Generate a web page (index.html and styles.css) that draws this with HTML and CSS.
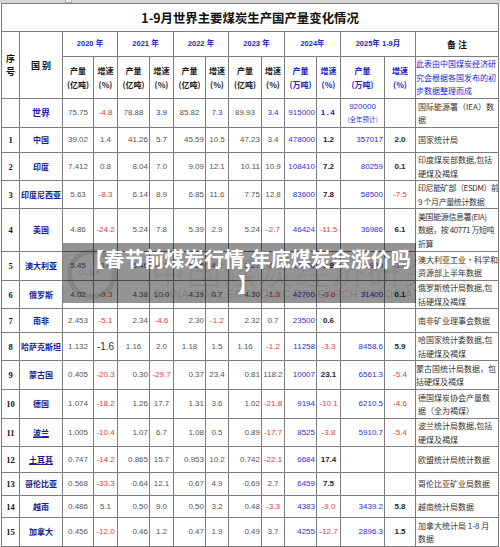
FILE: index.html
```html
<!DOCTYPE html>
<html lang="zh-CN">
<head>
<meta charset="utf-8">
<title>1-9月世界主要煤炭生产国产量变化情况</title>
<link rel="stylesheet" href="styles.css">
</head>
<body>
<div class="topbar"><span class="handle"></span></div>
<div class="sheet">
  <table class="coal">
    <colgroup>
      <col class="w18"><col class="w43">
      <col class="w31"><col class="w24">
      <col class="w32"><col class="w24">
      <col class="w32"><col class="w23">
      <col class="w33"><col class="w23">
      <col class="w32"><col class="w24">
      <col class="w44"><col class="w31">
      <col class="w83">
    </colgroup>
    <thead>
      <tr class="h28"><th colspan="15" class="title">1-9月世界主要煤炭生产国产量变化情况</th></tr>
      <tr class="h25">
        <th rowspan="2" class="hd">序<br>号</th>
        <th rowspan="2" class="hd">国 别</th>
        <th colspan="2" class="yr">2020 年</th>
        <th colspan="2" class="yr">2021 年</th>
        <th colspan="2" class="yr">2022 年</th>
        <th colspan="2" class="yr">2023 年</th>
        <th colspan="2" class="yr">2024年</th>
        <th colspan="2" class="yr">2025年 1-9月</th>
        <th class="hd">备 注</th>
      </tr>
      <tr class="h42">
        <th class="sub">产量<br>(亿吨)</th><th class="sub">增速<br>(%)</th>
        <th class="sub">产量<br>(亿吨)</th><th class="sub">增速<br>(%)</th>
        <th class="sub">产量<br>(亿吨)</th><th class="sub">增速<br>(%)</th>
        <th class="sub">产量<br>(亿吨)</th><th class="sub">增速<br>(%)</th>
        <th class="sub blue">产量<br>(万吨)</th><th class="sub blue">增速<br>(%)</th>
        <th class="sub blue">产量<br>(万吨)</th><th class="sub blue">增速<br>(%)</th>
        <th class="note notehead">此表由中国煤炭经济研<br>究会根据各国发布的初<br>步数据整理而成</th>
      </tr>
    </thead>
    <tbody class="data">
      <tr class="h29 world">
        <td></td><td class="name big">世界</td>
        <td>75.75</td><td class="r">-4.8</td>
        <td>78.88</td><td class="b">3.9</td>
        <td>85.82</td><td class="b">7.3</td>
        <td>89.93</td><td class="b">3.4</td>
        <td class="b">915000</td><td class="b wide">1.4</td>
        <td class="b">920000<br><span class="est">(全年预计)</span></td><td></td>
        <td class="note">国际能源署（IEA）数<br>据</td>
      </tr>
      <tr class="h25">
        <td class="no">1</td><td class="name">中国</td>
        <td>39.02</td><td>1.4</td><td>41.26</td><td>5.7</td><td>45.59</td><td>10.5</td><td>47.23</td><td>3.4</td>
        <td class="b">478000</td><td class="k">1.2</td><td class="b">357017</td><td class="k">2.0</td>
        <td class="note">国家统计局</td>
      </tr>
      <tr class="h27">
        <td class="no">2</td><td class="name">印度</td>
        <td>7.412</td><td>0.8</td><td>8.04</td><td>7.0</td><td>9.09</td><td>12.1</td><td>10.11</td><td>10.9</td>
        <td class="b">108410</td><td class="k">7.2</td><td class="b">80259</td><td class="k">0.1</td>
        <td class="note">印度煤炭部数据,包括<br>硬煤及褐煤</td>
      </tr>
      <tr class="h28">
        <td class="no">3</td><td class="name">印度尼西亚</td>
        <td>5.63</td><td class="r">-8.3</td><td>6.14</td><td>8.9</td><td>6.85</td><td>11.6</td><td>7.75</td><td>12.8</td>
        <td class="b">83600</td><td class="k">7.8</td><td class="b">58500</td><td class="r">-7.5</td>
        <td class="note tight">印尼能矿部（ESDM）前<br>9 个月产量统计数据</td>
      </tr>
      <tr class="h43">
        <td class="no">4</td><td class="name">美国</td>
        <td>4.86</td><td class="r">-24.2</td><td>5.24</td><td>7.8</td><td>5.39</td><td>2.9</td><td>5.24</td><td class="r">-2.7</td>
        <td class="b">46424</td><td class="r">-11.5</td><td class="b">36986</td><td class="k">6.1</td>
        <td class="note tight">美国能源信息署(EIA)<br>数据，按 40771 万短吨<br>折算</td>
      </tr>
      <tr class="h29">
        <td class="no">5</td><td class="name">澳大利亚</td>
        <td>5.45</td><td>0.4</td><td>5.46</td><td class="r">-4.1</td><td>5.25</td><td>4.2</td><td>5.27</td><td class="r">-1.4</td>
        <td class="b">26500</td><td class="k">3.9</td><td class="b">20930</td><td class="r">-1.0</td>
        <td class="note">澳大利亚工业·科学和<br>资源部上半年数据</td>
      </tr>
      <tr class="h28">
        <td class="no">6</td><td class="name">俄罗斯</td>
        <td>4.02</td><td class="r">-9.3</td><td>4.38</td><td>10.0</td><td>4.39</td><td>0.7</td><td>4.30</td><td class="r">-1.3</td>
        <td class="b">42700</td><td class="r">-0.6</td><td class="b">31400</td><td class="k">0.1</td>
        <td class="note">俄罗斯统计局数据,包<br>括硬煤及褐煤</td>
      </tr>
      <tr class="h24">
        <td class="no">7</td><td class="name">南非</td>
        <td>2.453</td><td class="r">-5.1</td><td>2.34</td><td class="r">-4.6</td><td>2.30</td><td class="r">-1.2</td><td>2.32</td><td>0.7</td>
        <td class="b">23500</td><td class="k">0.6</td><td></td><td></td>
        <td class="note">南非矿业理事会数据</td>
      </tr>
      <tr class="h27 centered">
        <td class="no">8</td><td class="name">哈萨克斯坦</td>
        <td>1.132</td><td class="kl">-1.6</td><td>1.16</td><td>2.0</td><td>1.18</td><td>1.5</td><td>1.16</td><td class="r">-1.2</td>
        <td class="b">11258</td><td class="r">-3.3</td><td class="b">8458.6</td><td class="k">5.9</td>
        <td class="note">哈国家统计委数据,包<br>括硬煤及褐煤</td>
      </tr>
      <tr class="h29">
        <td class="no">9</td><td class="name">蒙古国</td>
        <td>0.405</td><td class="r">-20.3</td><td>0.30</td><td class="r">-29.7</td><td>0.37</td><td>23.4</td><td>0.81</td><td>118.2</td>
        <td class="b">10007</td><td class="k">23.1</td><td class="b">6561.3</td><td class="r">-5.4</td>
        <td class="note flush">蒙古国统计局数据，包<br>括硬煤及褐煤</td>
      </tr>
      <tr class="h29">
        <td class="no">10</td><td class="name">德国</td>
        <td>1.074</td><td class="r">-18.2</td><td>1.26</td><td>17.7</td><td>1.31</td><td>3.6</td><td>1.02</td><td class="r">-21.8</td>
        <td class="b">9194</td><td class="r">-10.1</td><td class="b">6210.5</td><td class="r">-4.6</td>
        <td class="note">德国煤炭协会产量数<br>据（全为褐煤）</td>
      </tr>
      <tr class="h27">
        <td class="no">11</td><td class="name ul">波兰</td>
        <td>1.005</td><td class="r">-10.4</td><td>1.07</td><td>6.7</td><td>1.08</td><td>0.5</td><td>0.89</td><td class="r">-17.7</td>
        <td class="b">8525</td><td class="r">-3.8</td><td class="b">5910.7</td><td class="r">-5.4</td>
        <td class="note">波兰统计局数据,包括<br>硬煤及褐煤</td>
      </tr>
      <tr class="h26">
        <td class="no">12</td><td class="name ul">土耳其</td>
        <td>0.747</td><td class="r">-14.2</td><td>0.865</td><td>15.7</td><td>0.953</td><td>10.2</td><td>0.742</td><td class="r">-22.1</td>
        <td class="b">6684</td><td class="k">17.4</td><td></td><td></td>
        <td class="note">欧盟统计局统计数据</td>
      </tr>
      <tr class="h23">
        <td class="no">13</td><td class="name">哥伦比亚</td>
        <td>0.568</td><td class="r">-33.3</td><td>0.64</td><td>12.1</td><td>0.67</td><td>4.9</td><td>0.69</td><td>2.7</td>
        <td class="b">6459</td><td class="k">7.5</td><td></td><td></td>
        <td class="note">哥伦比亚矿业局数据</td>
      </tr>
      <tr class="h22">
        <td class="no">14</td><td class="name">越南</td>
        <td>0.486</td><td>5.1</td><td>0.50</td><td>9.0</td><td>0.50</td><td>3.2</td><td>0.48</td><td class="r">-3.3</td>
        <td class="b">4383</td><td class="r">-9.0</td><td class="b">3439.2</td><td class="k">5.8</td>
        <td class="note">越南统计局数据</td>
      </tr>
      <tr class="h29">
        <td class="no">15</td><td class="name">加拿大</td>
        <td>0.456</td><td class="r">-12.0</td><td>0.46</td><td>1.2</td><td>0.47</td><td>1.9</td><td>0.49</td><td>3.7</td>
        <td class="b">4255</td><td class="r">-12.7</td><td class="b">2896.3</td><td class="k">1.5</td>
        <td class="note">加拿大统计局 1-8 月<br>数据</td>
      </tr>
    </tbody>
  </table>

  <div class="mark" aria-hidden="true">
    <span class="mark-logo"><span class="mark-logo-txt">CCEA</span></span>
    <span class="mark-cn">中国煤炭经济研究会</span>
    <span class="mark-en">CHINA COAL ECONOMIC RESEARCH ASSOCIATION</span>
  </div>
  <div class="promo">【春节前煤炭行情,年底煤炭会涨价吗】</div>
</div>
</body>
</html>
```
FILE: styles.css
```css
html, body {
  margin: 0;
  padding: 0;
  background: #ffffff;
}
body {
  width: 500px;
  height: 547px;
  overflow: hidden;
  font-family: "Noto Sans CJK SC", "Liberation Sans", sans-serif;
  color: #333;
}
.topbar {
  height: 3px;
  background: #d6d6d6;
  position: relative;
}
.handle {
  position: absolute;
  left: 65px;
  top: 0;
  width: 5px;
  height: 2px;
  border: 1px solid #a8a8a8;
  border-top: 0;
  background: #f2f2f2;
}
.sheet {
  position: relative;
  margin-left: 1px;
  width: 497px;
}
table.coal {
  border-collapse: collapse;
  table-layout: fixed;
  width: 497px;
}
.w18 { width: 18px; }
.w23 { width: 23px; }
.w24 { width: 24px; }
.w31 { width: 31px; }
.w32 { width: 32px; }
.w33 { width: 33px; }
.w43 { width: 43px; }
.w44 { width: 44px; }
.w83 { width: 83px; }

.h22 { height: 22px; }
.h23 { height: 23px; }
.h24 { height: 24px; }
.h25 { height: 25px; }
.h26 { height: 26px; }
.h27 { height: 27px; }
.h28 { height: 28px; }
.h29 { height: 29px; }
.h42 { height: 42px; }
.h43 { height: 43px; }

.coal th, .coal td {
  border: 1px solid #7e7e7e;
  padding: 0 1px;
  font-size: 8px;
  line-height: 12px;
  vertical-align: middle;
  white-space: nowrap;
  overflow: hidden;
}
.coal th {
  font-weight: 700;
  color: #111;
  text-align: center;
}
.coal th.title {
  font-size: 12.4px;
  line-height: 16px;
  font-weight: 700;
  color: #111;
}
.coal th.hd {
  font-size: 9px;
  line-height: 13px;
}
.coal th.yr {
  color: #1f1fc4;
  font-family: "Liberation Sans", "Noto Sans CJK SC", sans-serif;
  font-size: 7.5px;
}
.coal th.sub {
  font-size: 8px;
  line-height: 14px;
  color: #1a1a1a;
}
.coal th.blue {
  color: #2323cc;
}
.coal th.notehead {
  color: #2525d6;
  font-weight: 400;
}

/* data cells */
.data td {
  font-family: "Liberation Sans", "Noto Sans CJK SC", sans-serif;
  color: #555;
  text-align: center;
}
.data td:nth-child(5),
.data td:nth-child(7),
.data td:nth-child(9),
.data td:nth-child(11),
.data td:nth-child(13) {
  text-align: right;
}
.data tr.world td,
.data tr.centered td:nth-child(5),
.data tr.centered td:nth-child(7),
.data tr.centered td:nth-child(9) {
  text-align: center;
}
.data tr.world td:nth-child(11) {
  text-align: right;
}
.data td.r { color: #e23a3a; }
.data td.b { color: #2f2fd0; }
.data td.k {
  color: #262626;
  font-weight: 700;
}
.data td.kl {
  color: #333;
  font-size: 10px;
}
.data td.wide {
  font-weight: 700;
  letter-spacing: 1.5px;
  color: #2a2aa8;
}
.data td .est {
  font-family: "Noto Sans CJK SC", sans-serif;
  font-size: 6.5px;
}
.data td.no {
  font-family: "Liberation Serif", "Noto Sans CJK SC", serif;
  font-weight: 700;
  font-size: 8.5px;
  color: #111;
}
.data td.name {
  font-family: "Noto Sans CJK SC", sans-serif;
  font-weight: 700;
  font-size: 8px;
  color: #1b1b8e;
}
.data td.big {
  font-size: 9px;
  color: #2020b0;
}
.data td.ul {
  text-decoration: underline;
}
.coal .data td.note,
.coal th.note {
  font-family: "Noto Sans CJK SC", sans-serif;
  text-align: left;
  padding-left: 2px;
  padding-right: 0;
  font-size: 8px;
  line-height: 13.5px;
}
.coal .data td.note {
  color: #333;
}
.coal .data td.flush,
.coal th.note {
  padding-left: 0;
}
.coal .data td.tight {
  letter-spacing: -0.4px;
}

/* watermark under the promo banner */
.mark {
  position: absolute;
  left: 62px;
  top: 240px;
  width: 420px;
  height: 62px;
  pointer-events: none;
}
.mark-logo {
  position: absolute;
  left: 4px;
  top: 6px;
  width: 40px;
  height: 40px;
  border: 5px solid rgba(40, 90, 40, 0.14);
  border-radius: 50%;
}
.mark-logo-txt {
  position: absolute;
  left: 6px;
  top: 14px;
  font-family: "Liberation Sans", sans-serif;
  font-size: 8px;
  color: rgba(0, 0, 0, 0.2);
}
.mark-cn {
  position: absolute;
  left: 88px;
  top: 8px;
  font-size: 34px;
  line-height: 40px;
  letter-spacing: 2px;
  color: rgba(0, 0, 0, 0.08);
  font-weight: 400;
  white-space: nowrap;
}
.mark-en {
  position: absolute;
  left: 90px;
  top: 45px;
  font-family: "Liberation Sans", sans-serif;
  font-size: 11px;
  letter-spacing: 0.4px;
  color: rgba(0, 0, 0, 0.16);
  white-space: nowrap;
}

/* dark promo banner */
.promo {
  position: absolute;
  left: 62px;
  top: 240px;
  width: 353px;
  height: 60px;
  box-sizing: border-box;
  padding: 3px 2px 0 18px;
  background: rgba(0, 0, 0, 0.42);
  color: #ffffff;
  font-family: "Noto Sans CJK SC", sans-serif;
  font-weight: 700;
  font-size: 20px;
  line-height: 25px;
  text-align: center;
  line-break: anywhere;
}
```
